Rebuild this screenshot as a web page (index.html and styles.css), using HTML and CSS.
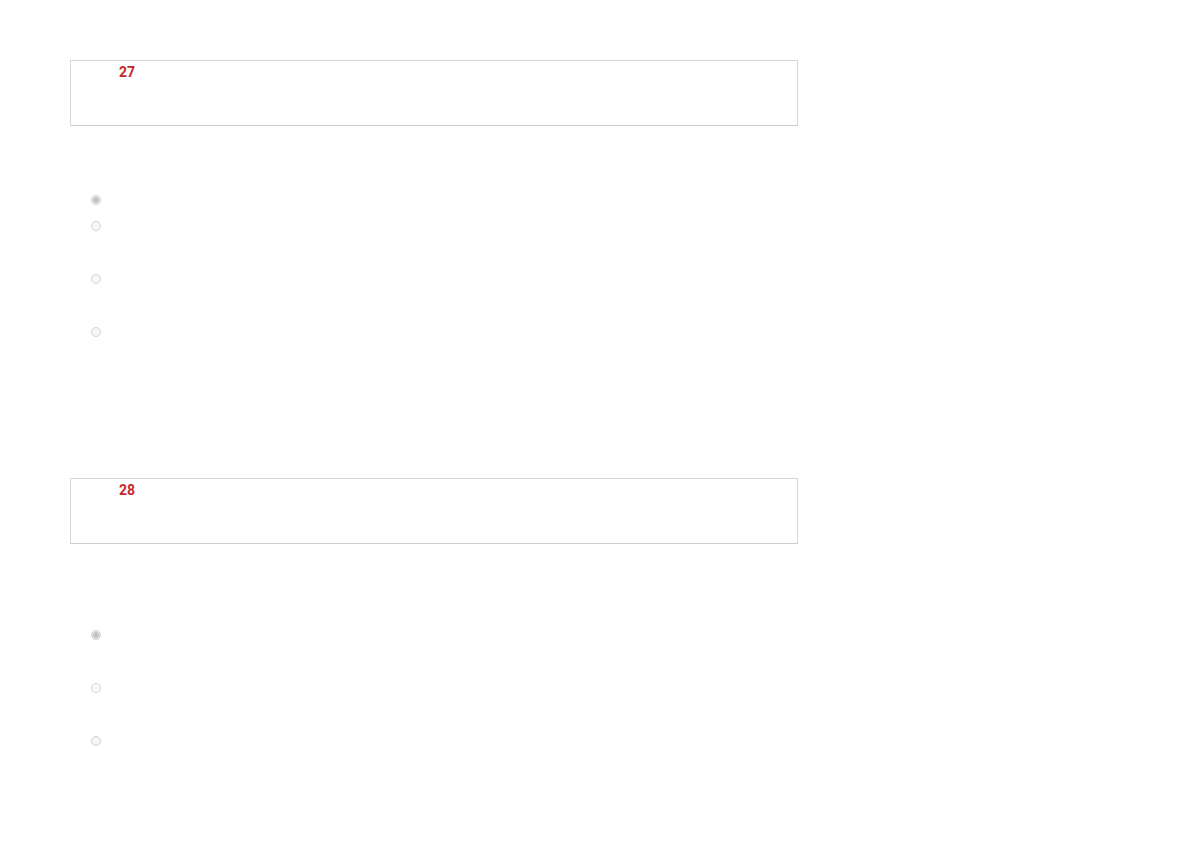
FILE: index.html
```html
<!DOCTYPE html>
<html lang="en">
<head>
<meta charset="utf-8">
<title>Questions</title>
<link rel="stylesheet" href="styles.css">
</head>
<body>
<div class="page">
  <section class="question q27">
    <div class="qbox"><span class="qnum">27</span></div>
    <ul class="options">
      <li class="opt short"><span class="radio checked"></span></li>
      <li class="opt tall"><span class="radio"></span></li>
      <li class="opt tall"><span class="radio"></span></li>
      <li class="opt tall"><span class="radio"></span></li>
    </ul>
  </section>
  <section class="question q28">
    <div class="qbox"><span class="qnum">28</span></div>
    <ul class="options">
      <li class="opt tall"><span class="radio checked"></span></li>
      <li class="opt tall"><span class="radio"></span></li>
      <li class="opt tall"><span class="radio"></span></li>
    </ul>
  </section>
</div>
</body>
</html>
```
FILE: styles.css
```css
html, body {
  margin: 0;
  padding: 0;
  background: #ffffff;
}
body {
  font-family: Roboto, "Liberation Sans", Arial, sans-serif;
  width: 1191px;
  height: 841px;
  overflow: hidden;
}
.page {
  padding: 60px 0 0 70px;
}
.qbox {
  box-sizing: border-box;
  width: 728px;
  height: 66px;
  border: 1px solid #d4d7dd;
  border-bottom-color: #c8ccd3;
  padding: 3px 0 0 48px;
}
.qnum {
  display: block;
  font-size: 14px;
  line-height: 16px;
  font-weight: 700;
  color: #c62828;
}
.options {
  list-style: none;
  margin: 69px 0 0 0;
  padding: 0 0 0 21px;
}
.q28 {
  margin-top: 98px;
}
.q28 .options {
  margin-top: 86px;
}
.opt {
  display: flex;
  align-items: flex-start;
}
.opt.short { height: 26px; }
.opt.tall { height: 53px; }
.radio {
  box-sizing: border-box;
  display: block;
  width: 10px;
  height: 10px;
  border-radius: 50%;
  border: 1px solid #d2d2d2;
  background: #f7f7f7;
  position: relative;
}
.radio.checked {
  border-color: #cfcfcf;
  background: #e9e9e9;
}
.radio.checked::after {
  content: "";
  position: absolute;
  left: 1px;
  top: 1px;
  width: 6px;
  height: 6px;
  border-radius: 50%;
  background: #c4c4c4;
}
```
